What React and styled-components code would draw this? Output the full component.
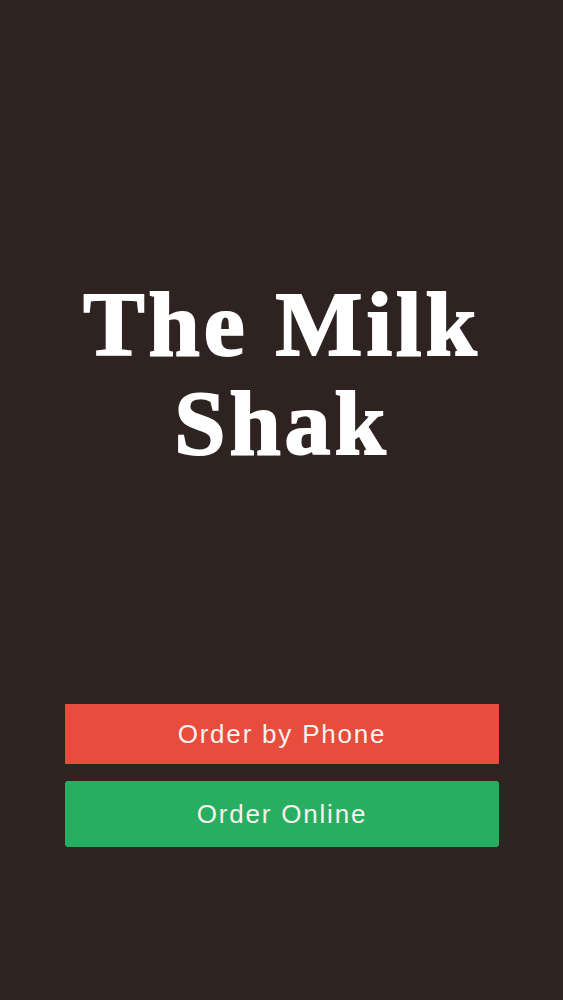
import React from "react";
import styled, { createGlobalStyle } from "styled-components";

const GlobalStyle = createGlobalStyle`
  html, body {
    margin: 0;
    padding: 0;
    background: #2f2322;
  }
`;

function App() {
  return (
    <>
      <GlobalStyle />
      <Screen>
        <Title>
          <TitleLine>The Milk</TitleLine>
          <TitleLine>Shak</TitleLine>
        </Title>
        <Actions>
          <ActionButton color="#e74c3c" height={60}>
            Order by Phone
          </ActionButton>
          <ActionButton color="#27ae60" height={66} rounded>
            Order Online
          </ActionButton>
        </Actions>
      </Screen>
    </>
  );
}

const Screen = styled.div`
  min-height: 1000px;
  background: #2f2322;
  display: flex;
  flex-direction: column;
  align-items: stretch;
  padding: 275px 64px 0 65px;
  box-sizing: border-box;
`;

const Title = styled.h1`
  margin: 0;
  color: #ffffff;
  font-family: "Liberation Serif", "Times New Roman", serif;
  font-weight: 700;
  font-size: 92px;
  line-height: 99px;
  letter-spacing: 4px;
  text-align: center;
  -webkit-text-stroke: 2px #ffffff;
`;

const TitleLine = styled.span`
  display: block;
  white-space: nowrap;
`;

const Actions = styled.div`
  margin-top: 231px;
  display: flex;
  flex-direction: column;
  gap: 17px;
`;

const ActionButton = styled.button`
  height: ${(p) => p.height}px;
  border: none;
  border-radius: ${(p) => (p.rounded ? "3px" : "1px")};
  background: ${(p) => p.color};
  color: #f7f1ef;
  font-family: "Liberation Sans", Arial, sans-serif;
  font-size: 26px;
  letter-spacing: 1.8px;
  padding: 0;
  cursor: pointer;
`;

export default App;
